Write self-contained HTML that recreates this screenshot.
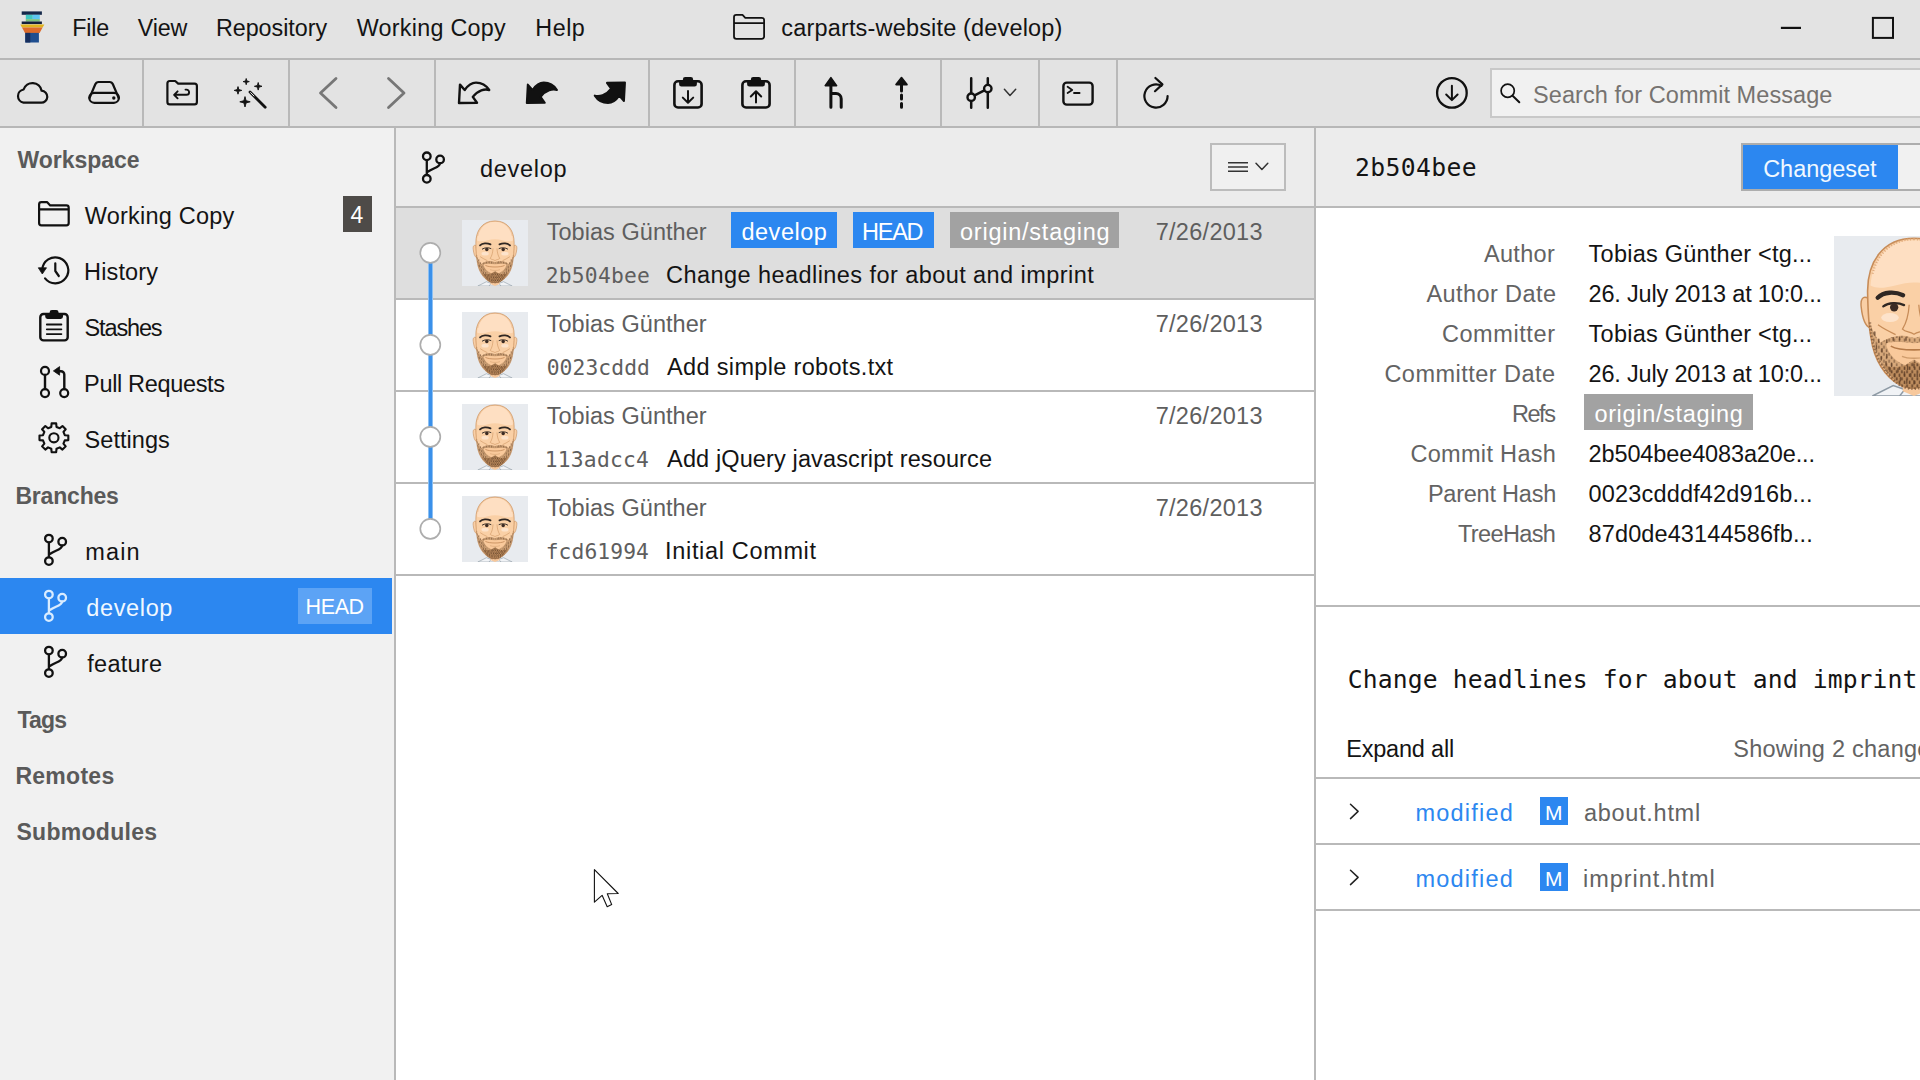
<!DOCTYPE html>
<html lang="en">
<head>
<meta charset="utf-8">
<title>carparts-website (develop)</title>
<style>
html,body{margin:0;padding:0;background:#fff;}
body{width:1920px;height:1080px;overflow:hidden;font-family:'Liberation Sans',sans-serif;}
#app{position:relative;width:1920px;height:1080px;overflow:hidden;background:#fff;}
.b{position:absolute;box-sizing:border-box;}
.t{position:absolute;white-space:pre;line-height:normal;}
.ln{position:absolute;background:#b9b9b9;}
svg.ic{position:absolute;left:0;top:0;width:1920px;height:1080px;overflow:visible;}
</style>
</head>

<body>
<div id="app">
<!-- title bar + toolbar -->
<div class="b" style="left:0;top:0;width:1920px;height:127px;background:#e3e3e3"></div>
<div class="ln" style="left:0;top:58px;width:1920px;height:2px;background:#b7b7b7"></div>
<div class="ln" style="left:0;top:126px;width:1920px;height:2px;background:#b7b7b7"></div>
<!-- toolbar dividers -->
<div class="ln" style="left:142px;top:60px;width:2px;height:66px"></div>
<div class="ln" style="left:288px;top:60px;width:2px;height:66px"></div>
<div class="ln" style="left:434px;top:60px;width:2px;height:66px"></div>
<div class="ln" style="left:648px;top:60px;width:2px;height:66px"></div>
<div class="ln" style="left:794px;top:60px;width:2px;height:66px"></div>
<div class="ln" style="left:940px;top:60px;width:2px;height:66px"></div>
<div class="ln" style="left:1038px;top:60px;width:2px;height:66px"></div>
<div class="ln" style="left:1116px;top:60px;width:2px;height:66px"></div>
<!-- search box -->
<div class="b" style="left:1490px;top:68px;width:440px;height:50px;background:#f1f1f1;border:2px solid #c8c8c8"></div>

<!-- sidebar -->
<div class="b" style="left:0;top:128px;width:394px;height:952px;background:#f1f1f1"></div>
<div class="ln" style="left:394px;top:128px;width:2px;height:952px"></div>
<div class="b" style="left:343px;top:196px;width:29px;height:36px;background:#4e4b48"></div>
<div class="b" style="left:0;top:578px;width:392px;height:56px;background:#2c87f0"></div>
<div class="b" style="left:298px;top:588px;width:74px;height:36px;background:#5ca3f5"></div>

<!-- commit list -->
<div class="b" style="left:396px;top:128px;width:918px;height:78px;background:#ececec"></div>
<div class="ln" style="left:396px;top:206px;width:918px;height:2px"></div>
<div class="b" style="left:1210px;top:143px;width:76px;height:48px;background:#f0f0f0;border:2px solid #bcbcbc"></div>
<div class="b" style="left:396px;top:208px;width:918px;height:90px;background:#dedede"></div>
<div class="ln" style="left:396px;top:298px;width:918px;height:2px"></div>
<div class="ln" style="left:396px;top:390px;width:918px;height:2px"></div>
<div class="ln" style="left:396px;top:482px;width:918px;height:2px"></div>
<div class="ln" style="left:396px;top:574px;width:918px;height:2px"></div>
<!-- graph line -->
<div class="b" style="left:428px;top:252px;width:5px;height:277px;background:#3a90ea;border-left:1px solid #8cc0f3;border-right:1px solid #8cc0f3"></div>
<!-- ref tags -->
<div class="b" style="left:731px;top:212px;width:106px;height:36px;background:#2c87f0"></div>
<div class="b" style="left:853px;top:212px;width:81px;height:36px;background:#2c87f0"></div>
<div class="b" style="left:950px;top:212px;width:169px;height:36px;background:#a2a2a2"></div>

<!-- detail -->
<div class="ln" style="left:1314px;top:128px;width:2px;height:952px"></div>
<div class="b" style="left:1316px;top:128px;width:604px;height:78px;background:#ececec"></div>
<div class="ln" style="left:1316px;top:206px;width:604px;height:2px"></div>
<div class="b" style="left:1741px;top:143px;width:200px;height:48px;background:#f1f1f1;border:2px solid #adadad"></div>
<div class="b" style="left:1743px;top:145px;width:155px;height:44px;background:#2c87f0"></div>
<div class="b" style="left:1584px;top:394px;width:169px;height:36px;background:#a2a2a2"></div>
<div class="ln" style="left:1314px;top:605px;width:606px;height:2px"></div>
<div class="ln" style="left:1314px;top:777px;width:606px;height:2px"></div>
<div class="ln" style="left:1314px;top:843px;width:606px;height:2px"></div>
<div class="ln" style="left:1314px;top:909px;width:606px;height:2px"></div>
<div class="b" style="left:1540px;top:797px;width:28px;height:28px;background:#2c87f0"></div>
<div class="b" style="left:1540px;top:863px;width:28px;height:28px;background:#2c87f0"></div>

<svg class="ic" viewBox="0 0 1920 1080" fill="none" stroke="none">
<defs><pattern id="stub" width="3.2" height="4.4" patternUnits="userSpaceOnUse"><rect x="0.4" y="0.3" width="0.9" height="1.9" fill="#4f3422"/><rect x="2" y="2.5" width="0.9" height="1.9" fill="#4f3422"/></pattern></defs>
<g id="logo">
<rect x="21.7" y="11.4" width="20.2" height="3.4" fill="#15284a"/>
<rect x="25.8" y="14.8" width="7" height="4.6" fill="#3fc8c2"/><rect x="32.8" y="14.8" width="7" height="4.6" fill="#5cc6f2"/>
<rect x="25.8" y="19.2" width="14" height="2.4" fill="#7ac27c"/>
<rect x="21.7" y="21.5" width="20.2" height="2.6" fill="#13203c"/>
<path d="M20.3 24.6H44.4L42.6 27.6H22z" fill="#e0b41f"/>
<path d="M22 27.5H42.6L39.6 32.9H25z" fill="#dd6b2a"/>
<rect x="25.3" y="32.9" width="13.6" height="9.6" fill="#1f4e8f"/><rect x="25.3" y="32.9" width="5" height="9.6" fill="#172f5e"/>
</g>
<path d="M734 36.5V17.2a2.3 2.3 0 0 1 2.3-2.3h6.2l2.8 2.9h16.500a2.3 2.3 0 0 1 2.3 2.3v16.400a2.3 2.3 0 0 1-2.3 2.3h-25.500a2.3 2.3 0 0 1-2.3-2.3zM734 23.2h30.1" stroke="#111" stroke-width="1.8" stroke-linejoin="round"/>
<rect x="1780.9" y="26.8" width="20.1" height="2.2" fill="#111"/>
<rect x="1872.9" y="17.9" width="20.1" height="20" stroke="#111" stroke-width="2"/>
<path d="M23.5 102.7h17.5a6 6 0 0 0 0.6-12 9.3 9.3 0 0 0-18-1.2 6.7 6.7 0 0 0-0.1 13.2z" stroke="#111" stroke-width="2.2" stroke-linecap="round" stroke-linejoin="round"/>
<path d="M89.5 98L95.3 84.3a3.6 3.6 0 0 1 3.3-2.3h11a3.6 3.6 0 0 1 3.3 2.3L118.7 98" stroke="#111" stroke-width="2.2" stroke-linecap="round" stroke-linejoin="round"/>
<rect x="89.3" y="92.8" width="29.6" height="10" rx="5" stroke="#111" stroke-width="2.2" stroke-linecap="round" stroke-linejoin="round"/><circle cx="113.8" cy="98" r="1.7" fill="#111"/>
<path d="M167.4 102V83.4a2.4 2.4 0 0 1 2.4-2.4h5.4l3 2.6h16.3a2.4 2.4 0 0 1 2.4 2.4v16a2.4 2.4 0 0 1-2.4 2.4h-24.7a2.4 2.4 0 0 1-2.4-2.4z" stroke="#111" stroke-width="2.2" stroke-linecap="round" stroke-linejoin="round"/>
<path d="M174.3 94.8h12.2a2.6 2.6 0 0 0 0-5.2h-1M177.6 91.3l-3.5 3.5 3.5 3.5" stroke="#111" stroke-width="1.9" stroke-linecap="round" stroke-linejoin="round"/>
<path d="M246.20 78.50L246.86 80.94L249.30 81.60L246.86 82.26L246.20 84.70L245.54 82.26L243.10 81.60L245.54 80.94z" fill="#111" stroke="#111" stroke-width="0.9" stroke-linejoin="round"/>
<path d="M258.20 82.50L259.01 85.49L262.00 86.30L259.01 87.11L258.20 90.10L257.39 87.11L254.40 86.30L257.39 85.49z" fill="#111" stroke="#111" stroke-width="0.9" stroke-linejoin="round"/>
<path d="M238.00 86.60L238.81 89.59L241.80 90.40L238.81 91.21L238.00 94.20L237.19 91.21L234.20 90.40L237.19 89.59z" fill="#111" stroke="#111" stroke-width="0.9" stroke-linejoin="round"/>
<path d="M245.00 96.60L246.10 100.70L250.20 101.80L246.10 102.90L245.00 107.00L243.90 102.90L239.80 101.80L243.90 100.70z" fill="#111" stroke="#111" stroke-width="0.9" stroke-linejoin="round"/>
<path d="M250 92L265.2 107.3" stroke="#111" stroke-width="2.8" stroke-linecap="round"/>
<path d="M250.6 92.6L254 96" stroke="#e3e3e3" stroke-width="1" stroke-linecap="round"/>
<path d="M336 78.5L320.5 93L336 107.5" stroke="#777" stroke-width="2.8" stroke-linecap="round" stroke-linejoin="round"/>
<path d="M388.5 78.5L404 93L388.5 107.5" stroke="#777" stroke-width="2.8" stroke-linecap="round" stroke-linejoin="round"/>
<path d="M459 103L460 84.6L464.7 90C468 85.2 472 82.6 476 82.6C481.5 82.6 486.5 85.8 489.2 90C485 88.6 478 90 472.8 96.9L477 102.8z" stroke="#111" stroke-width="2.4" stroke-linejoin="round"/>
<path d="M459 103L460 84.6L464.7 90C468 85.2 472 82.6 476 82.6C481.5 82.6 486.5 85.8 489.2 90C485 88.6 478 90 472.8 96.9L477 102.8z" transform="translate(67.8 0)" fill="#111" stroke="#111" stroke-width="2" stroke-linejoin="round"/>
<path d="M459 103L460 84.6L464.7 90C468 85.2 472 82.6 476 82.6C481.5 82.6 486.5 85.8 489.2 90C485 88.6 478 90 472.8 96.9L477 102.8z" transform="translate(1083.95 185.60) scale(-1 -1)" fill="#111" stroke="#111" stroke-width="2" stroke-linejoin="round"/>
<rect x="674.4" y="81.3" width="27.2" height="26.2" rx="3.6" stroke="#111" stroke-width="2.6"/><path d="M679.1 80.5h3.8v-1.2a2.3 2.3 0 0 1 2.3-2.3h5.6a2.3 2.3 0 0 1 2.3 2.3v1.2h3.8v3.8a2.3 2.3 0 0 1-2.3 2.3h-13.2a2.3 2.3 0 0 1-2.3-2.3z" fill="#111"/><path d="M688.0 91V102M682.8 97.6l5.2 5.2 5.2-5.2" stroke="#111" stroke-width="2" stroke-linecap="round" stroke-linejoin="round"/>
<rect x="742.4" y="81.3" width="27.2" height="26.2" rx="3.6" stroke="#111" stroke-width="2.6"/><path d="M747.1 80.5h3.8v-1.2a2.3 2.3 0 0 1 2.3-2.3h5.6a2.3 2.3 0 0 1 2.3 2.3v1.2h3.8v3.8a2.3 2.3 0 0 1-2.3 2.3h-13.2a2.3 2.3 0 0 1-2.3-2.3z" fill="#111"/><path d="M756.0 102.4V91.4M750.8 96.5l5.2-5.2 5.2 5.2" stroke="#111" stroke-width="2" stroke-linecap="round" stroke-linejoin="round"/>
<path d="M830.9 77.6L836.6 85.6H825.2z" fill="#111" stroke="#111" stroke-width="1.6" stroke-linejoin="round"/>
<path d="M830.9 85V107.3M831.5 93.6h4.5a5.2 5.2 0 0 1 5.2 5.2v8.5" stroke="#111" stroke-width="3" stroke-linecap="round" stroke-linejoin="round"/>
<path d="M901.5 77.6L907 84.6H896z" fill="#111" stroke="#111" stroke-width="1.6" stroke-linejoin="round"/>
<path d="M901.5 85V91M901.5 95V99M901.5 103.6V107.3" stroke="#111" stroke-width="3" stroke-linecap="round"/>
<path d="M971.2 78.2V107.7M987.8 78.2V107.7M971.2 97.2L987.8 88.6" stroke="#111" stroke-width="2.5" stroke-linecap="round"/>
<circle cx="971.2" cy="97.2" r="3.7" fill="#e3e3e3" stroke="#111" stroke-width="2.4"/><circle cx="987.8" cy="88.6" r="3.7" fill="#e3e3e3" stroke="#111" stroke-width="2.4"/>
<path d="M1004.4 89.3L1010 95.4L1015.7 89.3" stroke="#333" stroke-width="1.5" stroke-linecap="round" stroke-linejoin="round"/>
<rect x="1063.4" y="82.6" width="29.2" height="22" rx="3.4" stroke="#111" stroke-width="2.4" stroke-linecap="round" stroke-linejoin="round"/>
<path d="M1067.6 86.8l4.6 3.2-4.6 3M1074 93h5.6" stroke="#111" stroke-width="1.8" stroke-linecap="round" stroke-linejoin="round"/>
<path d="M1161.45 85.76A11.6 11.6 0 1 0 1167.60 96.00" stroke="#111" stroke-width="2.2" stroke-linecap="round" stroke-linejoin="round"/>
<path d="M1155.4 78l7 6.4-7.4 6.8" stroke="#111" stroke-width="2.2" stroke-linecap="round" stroke-linejoin="round"/>
<circle cx="1451.9" cy="92.9" r="14.8" stroke="#111" stroke-width="2.3"/>
<path d="M1451.9 85.8V99.8M1446.2 94.5l5.7 5.6 5.7-5.6" stroke="#111" stroke-width="2" stroke-linecap="round" stroke-linejoin="round"/>
<circle cx="1507.7" cy="90.7" r="6.6" stroke="#111" stroke-width="1.7"/><path d="M1512.6 95.7L1519.3 102.2" stroke="#111" stroke-width="2" stroke-linecap="round"/>
<path d="M39.1 223V204.4a2.3 2.3 0 0 1 2.3-2.3h5.6l3.2 3.3h16.2a2.3 2.3 0 0 1 2.3 2.3v15.3a2.3 2.3 0 0 1-2.3 2.3h-25a2.3 2.3 0 0 1-2.3-2.3zM39.1 209.3h29.6" stroke="#111" stroke-width="2.2" stroke-linecap="round" stroke-linejoin="round"/>
<path d="M42.30 269.40A13 13 0 1 1 45.06 278.40" stroke="#111" stroke-width="2.2" stroke-linecap="round" stroke-linejoin="round"/>
<path d="M38.3 267.8h8.2l-4.2 6.2z" fill="#111" stroke="#111" stroke-width="0.8" stroke-linejoin="round"/>
<path d="M55.3 263.3V271l3.5 5" stroke="#111" stroke-width="2.2" stroke-linecap="round" stroke-linejoin="round"/>
<rect x="40.3" y="314" width="27.4" height="26.4" rx="3.2" stroke="#111" stroke-width="2.4" stroke-linecap="round" stroke-linejoin="round"/>
<path d="M45.2 314h4.4v-1.6a2.4 2.4 0 0 1 2.4-2.4h4.2a2.4 2.4 0 0 1 2.4 2.4v1.6h4.4v2.6a2.3 2.3 0 0 1-2.3 2.3h-13.2a2.3 2.3 0 0 1-2.3-2.3z" fill="#111"/>
<path d="M46.8 324.5h14.6M46.8 329.3h14.6M46.8 334.1h14.6" stroke="#111" stroke-width="1.8" stroke-linecap="round"/>
<circle cx="45" cy="370.9" r="4" stroke="#111" stroke-width="2.2" stroke-linecap="round" stroke-linejoin="round"/><circle cx="45" cy="393.1" r="4" stroke="#111" stroke-width="2.2" stroke-linecap="round" stroke-linejoin="round"/><circle cx="64.2" cy="393.1" r="4" stroke="#111" stroke-width="2.2" stroke-linecap="round" stroke-linejoin="round"/>
<path d="M45 375V389M64.3 389V374.6a3.4 3.4 0 0 0-3.4-3.4h-2" stroke="#111" stroke-width="2.4" stroke-linecap="round" stroke-linejoin="round"/>
<path d="M53.4 370.9L59.6 366.6V375.2z" fill="#111" stroke="#111" stroke-width="0.8" stroke-linejoin="round"/>
<path d="M51.29 426.91L51.62 423.38L56.18 423.38L56.51 426.91L59.75 428.25L62.48 425.99L65.71 429.22L63.45 431.95L64.79 435.19L68.32 435.52L68.32 440.08L64.79 440.41L63.45 443.65L65.71 446.38L62.48 449.61L59.75 447.35L56.51 448.69L56.18 452.22L51.62 452.22L51.29 448.69L48.05 447.35L45.32 449.61L42.09 446.38L44.35 443.65L43.01 440.41L39.48 440.08L39.48 435.52L43.01 435.19L44.35 431.95L42.09 429.22L45.32 425.99L48.05 428.25z" stroke="#111" stroke-width="2.1" stroke-linejoin="round"/>
<circle cx="53.9" cy="437.8" r="4.6" stroke="#111" stroke-width="2.1"/>
<g transform="translate(0 0)" stroke="#111" stroke-width="2.3" stroke-linecap="round"><circle cx="48.9" cy="538.6" r="3.8"/><circle cx="48.9" cy="561.1" r="3.8"/><circle cx="62.2" cy="541.7" r="3.8"/><path d="M48.9 542.6V557.1M62 545.7C62 549.6 56 549.8 49.4 554.3"/></g>
<g transform="translate(0 56)" stroke="#d9ecff" stroke-width="2.3" stroke-linecap="round"><circle cx="48.9" cy="538.6" r="3.8"/><circle cx="48.9" cy="561.1" r="3.8"/><circle cx="62.2" cy="541.7" r="3.8"/><path d="M48.9 542.6V557.1M62 545.7C62 549.6 56 549.8 49.4 554.3"/></g>
<g transform="translate(0 112)" stroke="#111" stroke-width="2.3" stroke-linecap="round"><circle cx="48.9" cy="538.6" r="3.8"/><circle cx="48.9" cy="561.1" r="3.8"/><circle cx="62.2" cy="541.7" r="3.8"/><path d="M48.9 542.6V557.1M62 545.7C62 549.6 56 549.8 49.4 554.3"/></g>
<g transform="translate(377.90000000000003 -382.29999999999995)" stroke="#111" stroke-width="2.3" stroke-linecap="round"><circle cx="48.9" cy="538.6" r="3.8"/><circle cx="48.9" cy="561.1" r="3.8"/><circle cx="62.2" cy="541.7" r="3.8"/><path d="M48.9 542.6V557.1M62 545.7C62 549.6 56 549.8 49.4 554.3"/></g>
<path d="M1228 162.7h20M1228 167h20M1228 171.3h20" stroke="#333" stroke-width="1.5"/>
<path d="M1256 163.2L1261.9 169.5L1267.8 163.2" stroke="#333" stroke-width="1.5" stroke-linecap="round" stroke-linejoin="round"/>
<circle cx="430.3" cy="252.8" r="10" fill="#fff" stroke="#adadad" stroke-width="1.7"/>
<circle cx="430.3" cy="344.8" r="10" fill="#fff" stroke="#adadad" stroke-width="1.7"/>
<circle cx="430.3" cy="436.8" r="10" fill="#fff" stroke="#adadad" stroke-width="1.7"/>
<circle cx="430.3" cy="528.8" r="10" fill="#fff" stroke="#adadad" stroke-width="1.7"/>
<g transform="translate(462 220) scale(0.66)"><svg x="0" y="0" width="100" height="100" viewBox="0 0 100 100" overflow="hidden">
<rect width="100" height="100" fill="#e8ebef"/>
<path d="M24 100L37 93.500 50 98 63 93.500 76 100z" fill="#f1f3f6" stroke="#8d99a4" stroke-width="0.9"/>
<path d="M41 100L45 95M59 100L55 95" stroke="#8d99a4" stroke-width="0.9" fill="none"/>
<path d="M43 88h14v9l-7 3-7-3z" fill="#f7c89c"/>
<path d="M21.500 39C18 37 16.400 39.500 17 44.500C17.600 50 19 56 22.500 57.500zM78.500 39C82 37 83.600 39.500 83 44.500C82.400 50 81 56 77.500 57.500z" fill="#f9cfa6" stroke="#c78c58" stroke-width="0.9"/>
<path d="M50 1.400C30 1.400 20.800 17 21 35C21.200 47 21.600 56 23.200 64C25 77.500 32 88 41 93C45 95.600 55 95.600 59 92.500C68 88 75 77.500 76.800 64C78.400 56 78.800 47 79 35C79.200 17 70 1.400 50 1.400z" fill="#fad0a6" stroke="#c78c58" stroke-width="1"/>
<path d="M50 2.600C33 2.600 24 15 22.800 31C30 35 40 29 50 29C60 29 70 35 77.200 31C76 15 67 2.600 50 2.600z" fill="#fedfc2"/>
<path d="M50 2C36 2 27 11 24 24" fill="none" stroke="#d9a373" stroke-width="1.400" stroke-dasharray="0.7 1.100" opacity="0.8"/>
<path d="M50 2C64 2 73 11 76 24" fill="none" stroke="#d9a373" stroke-width="1.400" stroke-dasharray="0.7 1.100" opacity="0.8"/>
<ellipse cx="35" cy="51" rx="5.500" ry="2.800" fill="#fde3cb"/><ellipse cx="65" cy="51" rx="5.500" ry="2.800" fill="#fde3cb"/>
<path d="M22.500 54C23 62 24.500 71 28.500 78.500C33 86.500 39 92.300 43 94.200C47 96 53 96 57 93.800C61 92.300 67 86.500 71.500 78.500C75.500 71 77 62 77.500 54C76 59 74 63 71 66.500C67 64 62 62.300 57 62.300C54 62.300 52 63.600 50 63.600C48 63.600 46 62.300 43 62.300C38 62.300 33 64 29 66.500C26 63 24 59 22.500 54z" fill="#cf9f70" opacity="0.8"/><path d="M22.500 54C23 62 24.500 71 28.500 78.500C33 86.500 39 92.300 43 94.200C47 96 53 96 57 93.800C61 92.300 67 86.500 71.500 78.500C75.500 71 77 62 77.500 54C76 59 74 63 71 66.500C67 64 62 62.300 57 62.300C54 62.300 52 63.600 50 63.600C48 63.600 46 62.300 43 62.300C38 62.300 33 64 29 66.500C26 63 24 59 22.500 54z" fill="url(#stub)" opacity="0.55"/><path d="M30 79C35 84 43 82 50 78.500C57 82 65 84 70 79C66.500 86 61 92 57 93.900C53 96 47 96 43 93.900C39 92 33.500 86 30 79z" fill="#a87446" opacity="0.55"/><path d="M30 79C35 84 43 82 50 78.500C57 82 65 84 70 79C66.500 86 61 92 57 93.900C53 96 47 96 43 93.900C39 92 33.500 86 30 79z" fill="url(#stub)" opacity="0.7"/>
<path d="M22.500 54C23 62 24.500 71 28.500 78.500C33 86.500 39 92.300 43 94.200C47 96 53 96 57 93.800C61 92.300 67 86.500 71.500 78.500C75.500 71 77 62 77.500 54" fill="none" stroke="#6b4a30" stroke-width="1.500" stroke-dasharray="0.8 1.300" opacity="0.65"/>
<path d="M32.500 67.200C38 65.600 44 66.600 50 67C56 66.600 62 65.600 67.500 67.200C66.500 73 61.500 79 55.500 80.600L50 77.200L44.500 80.600C38.500 79 33.500 73 32.500 67.200z" fill="#f9c99b"/>
<path d="M35.500 68.800C41 72 59 72 64.500 68.800" fill="none" stroke="#b57a48" stroke-width="1"/>
<path d="M42.500 75.200C46 76.800 54 76.800 57.500 75.200" fill="none" stroke="#cf9c6c" stroke-width="0.8"/>
<g stroke="#5f4029" stroke-width="0.9" stroke-linecap="round" opacity="0.8">
<path d="M25.500 60v2M28 64.500v2M26.500 68.500v2M30 70.500v2M29.500 75.500v2M32.500 78.500v2M35 82.500v2M38 86v2M41.500 88.500v2M45.500 90v2M50 90.500v2M54.500 90v2M58.500 88.500v2M62 86v2M65 82.500v2M67.500 78.500v2M70.500 75.500v2M70 70.500v2M73.500 68.500v2M72 64.500v2M74.500 60v2M40 83v2M44 85v2M48 86v2M52 86v2M56 85v2M60 83v2M46 81.500v2M50 80v2M54 81.500v2M36 79.500v2M64 79.500v2M33 74v2M67 74v2M37 63.600v1.600M41 63.200v1.600M45 63.600v1.600M55 63.600v1.600M59 63.200v1.600M63 63.600v1.600M33 65v1.600M67 65v1.600"/>
</g>
<path d="M47 43C46.600 49 45.500 54 42.800 58.200C44.800 60.200 47 59.600 50 61.400C53 59.600 55.200 60.200 57.200 58.200C54.500 54 53.400 49 53 43" fill="none" stroke="#c78c58" stroke-width="0.8"/>
<path d="M27.500 55.500C31 58 35 60 38.500 61.600M72.500 55.500C69 58 65 60 61.500 61.600" fill="none" stroke="#c78c58" stroke-width="0.8"/>
<path d="M27.300 38.600C31 34.800 38 34.600 43.200 37" fill="none" stroke="#2f2723" stroke-width="2.700" stroke-linecap="round"/>
<path d="M72.700 38.600C69 34.800 62 34.600 56.800 37" fill="none" stroke="#2f2723" stroke-width="2.700" stroke-linecap="round"/>
<path d="M30.800 44C34 41.600 40 41.400 43.800 43.200M69.200 44C66 41.600 60 41.400 56.200 43.200" fill="none" stroke="#2f2723" stroke-width="1.400" stroke-linecap="round"/>
<circle cx="37.600" cy="44.600" r="2.600" fill="#3b2b24"/><circle cx="62.400" cy="44.600" r="2.600" fill="#3b2b24"/>
</svg>
</g>
<g transform="translate(462 312) scale(0.66)"><svg x="0" y="0" width="100" height="100" viewBox="0 0 100 100" overflow="hidden">
<rect width="100" height="100" fill="#e8ebef"/>
<path d="M24 100L37 93.500 50 98 63 93.500 76 100z" fill="#f1f3f6" stroke="#8d99a4" stroke-width="0.9"/>
<path d="M41 100L45 95M59 100L55 95" stroke="#8d99a4" stroke-width="0.9" fill="none"/>
<path d="M43 88h14v9l-7 3-7-3z" fill="#f7c89c"/>
<path d="M21.500 39C18 37 16.400 39.500 17 44.500C17.600 50 19 56 22.500 57.500zM78.500 39C82 37 83.600 39.500 83 44.500C82.400 50 81 56 77.500 57.500z" fill="#f9cfa6" stroke="#c78c58" stroke-width="0.9"/>
<path d="M50 1.400C30 1.400 20.800 17 21 35C21.200 47 21.600 56 23.200 64C25 77.500 32 88 41 93C45 95.600 55 95.600 59 92.500C68 88 75 77.500 76.800 64C78.400 56 78.800 47 79 35C79.200 17 70 1.400 50 1.400z" fill="#fad0a6" stroke="#c78c58" stroke-width="1"/>
<path d="M50 2.600C33 2.600 24 15 22.800 31C30 35 40 29 50 29C60 29 70 35 77.200 31C76 15 67 2.600 50 2.600z" fill="#fedfc2"/>
<path d="M50 2C36 2 27 11 24 24" fill="none" stroke="#d9a373" stroke-width="1.400" stroke-dasharray="0.7 1.100" opacity="0.8"/>
<path d="M50 2C64 2 73 11 76 24" fill="none" stroke="#d9a373" stroke-width="1.400" stroke-dasharray="0.7 1.100" opacity="0.8"/>
<ellipse cx="35" cy="51" rx="5.500" ry="2.800" fill="#fde3cb"/><ellipse cx="65" cy="51" rx="5.500" ry="2.800" fill="#fde3cb"/>
<path d="M22.500 54C23 62 24.500 71 28.500 78.500C33 86.500 39 92.300 43 94.200C47 96 53 96 57 93.800C61 92.300 67 86.500 71.500 78.500C75.500 71 77 62 77.500 54C76 59 74 63 71 66.500C67 64 62 62.300 57 62.300C54 62.300 52 63.600 50 63.600C48 63.600 46 62.300 43 62.300C38 62.300 33 64 29 66.500C26 63 24 59 22.500 54z" fill="#cf9f70" opacity="0.8"/><path d="M22.500 54C23 62 24.500 71 28.500 78.500C33 86.500 39 92.300 43 94.200C47 96 53 96 57 93.800C61 92.300 67 86.500 71.500 78.500C75.500 71 77 62 77.500 54C76 59 74 63 71 66.500C67 64 62 62.300 57 62.300C54 62.300 52 63.600 50 63.600C48 63.600 46 62.300 43 62.300C38 62.300 33 64 29 66.500C26 63 24 59 22.500 54z" fill="url(#stub)" opacity="0.55"/><path d="M30 79C35 84 43 82 50 78.500C57 82 65 84 70 79C66.500 86 61 92 57 93.900C53 96 47 96 43 93.900C39 92 33.500 86 30 79z" fill="#a87446" opacity="0.55"/><path d="M30 79C35 84 43 82 50 78.500C57 82 65 84 70 79C66.500 86 61 92 57 93.900C53 96 47 96 43 93.900C39 92 33.500 86 30 79z" fill="url(#stub)" opacity="0.7"/>
<path d="M22.500 54C23 62 24.500 71 28.500 78.500C33 86.500 39 92.300 43 94.200C47 96 53 96 57 93.800C61 92.300 67 86.500 71.500 78.500C75.500 71 77 62 77.500 54" fill="none" stroke="#6b4a30" stroke-width="1.500" stroke-dasharray="0.8 1.300" opacity="0.65"/>
<path d="M32.500 67.200C38 65.600 44 66.600 50 67C56 66.600 62 65.600 67.500 67.200C66.500 73 61.500 79 55.500 80.600L50 77.200L44.500 80.600C38.500 79 33.500 73 32.500 67.200z" fill="#f9c99b"/>
<path d="M35.500 68.800C41 72 59 72 64.500 68.800" fill="none" stroke="#b57a48" stroke-width="1"/>
<path d="M42.500 75.200C46 76.800 54 76.800 57.500 75.200" fill="none" stroke="#cf9c6c" stroke-width="0.8"/>
<g stroke="#5f4029" stroke-width="0.9" stroke-linecap="round" opacity="0.8">
<path d="M25.500 60v2M28 64.500v2M26.500 68.500v2M30 70.500v2M29.500 75.500v2M32.500 78.500v2M35 82.500v2M38 86v2M41.500 88.500v2M45.500 90v2M50 90.500v2M54.500 90v2M58.500 88.500v2M62 86v2M65 82.500v2M67.500 78.500v2M70.500 75.500v2M70 70.500v2M73.500 68.500v2M72 64.500v2M74.500 60v2M40 83v2M44 85v2M48 86v2M52 86v2M56 85v2M60 83v2M46 81.500v2M50 80v2M54 81.500v2M36 79.500v2M64 79.500v2M33 74v2M67 74v2M37 63.600v1.600M41 63.200v1.600M45 63.600v1.600M55 63.600v1.600M59 63.200v1.600M63 63.600v1.600M33 65v1.600M67 65v1.600"/>
</g>
<path d="M47 43C46.600 49 45.500 54 42.800 58.200C44.800 60.200 47 59.600 50 61.400C53 59.600 55.200 60.200 57.200 58.200C54.500 54 53.400 49 53 43" fill="none" stroke="#c78c58" stroke-width="0.8"/>
<path d="M27.500 55.500C31 58 35 60 38.500 61.600M72.500 55.500C69 58 65 60 61.500 61.600" fill="none" stroke="#c78c58" stroke-width="0.8"/>
<path d="M27.300 38.600C31 34.800 38 34.600 43.200 37" fill="none" stroke="#2f2723" stroke-width="2.700" stroke-linecap="round"/>
<path d="M72.700 38.600C69 34.800 62 34.600 56.800 37" fill="none" stroke="#2f2723" stroke-width="2.700" stroke-linecap="round"/>
<path d="M30.800 44C34 41.600 40 41.400 43.800 43.200M69.200 44C66 41.600 60 41.400 56.200 43.200" fill="none" stroke="#2f2723" stroke-width="1.400" stroke-linecap="round"/>
<circle cx="37.600" cy="44.600" r="2.600" fill="#3b2b24"/><circle cx="62.400" cy="44.600" r="2.600" fill="#3b2b24"/>
</svg>
</g>
<g transform="translate(462 404) scale(0.66)"><svg x="0" y="0" width="100" height="100" viewBox="0 0 100 100" overflow="hidden">
<rect width="100" height="100" fill="#e8ebef"/>
<path d="M24 100L37 93.500 50 98 63 93.500 76 100z" fill="#f1f3f6" stroke="#8d99a4" stroke-width="0.9"/>
<path d="M41 100L45 95M59 100L55 95" stroke="#8d99a4" stroke-width="0.9" fill="none"/>
<path d="M43 88h14v9l-7 3-7-3z" fill="#f7c89c"/>
<path d="M21.500 39C18 37 16.400 39.500 17 44.500C17.600 50 19 56 22.500 57.500zM78.500 39C82 37 83.600 39.500 83 44.500C82.400 50 81 56 77.500 57.500z" fill="#f9cfa6" stroke="#c78c58" stroke-width="0.9"/>
<path d="M50 1.400C30 1.400 20.800 17 21 35C21.200 47 21.600 56 23.200 64C25 77.500 32 88 41 93C45 95.600 55 95.600 59 92.500C68 88 75 77.500 76.800 64C78.400 56 78.800 47 79 35C79.200 17 70 1.400 50 1.400z" fill="#fad0a6" stroke="#c78c58" stroke-width="1"/>
<path d="M50 2.600C33 2.600 24 15 22.800 31C30 35 40 29 50 29C60 29 70 35 77.200 31C76 15 67 2.600 50 2.600z" fill="#fedfc2"/>
<path d="M50 2C36 2 27 11 24 24" fill="none" stroke="#d9a373" stroke-width="1.400" stroke-dasharray="0.7 1.100" opacity="0.8"/>
<path d="M50 2C64 2 73 11 76 24" fill="none" stroke="#d9a373" stroke-width="1.400" stroke-dasharray="0.7 1.100" opacity="0.8"/>
<ellipse cx="35" cy="51" rx="5.500" ry="2.800" fill="#fde3cb"/><ellipse cx="65" cy="51" rx="5.500" ry="2.800" fill="#fde3cb"/>
<path d="M22.500 54C23 62 24.500 71 28.500 78.500C33 86.500 39 92.300 43 94.200C47 96 53 96 57 93.800C61 92.300 67 86.500 71.500 78.500C75.500 71 77 62 77.500 54C76 59 74 63 71 66.500C67 64 62 62.300 57 62.300C54 62.300 52 63.600 50 63.600C48 63.600 46 62.300 43 62.300C38 62.300 33 64 29 66.500C26 63 24 59 22.500 54z" fill="#cf9f70" opacity="0.8"/><path d="M22.500 54C23 62 24.500 71 28.500 78.500C33 86.500 39 92.300 43 94.200C47 96 53 96 57 93.800C61 92.300 67 86.500 71.500 78.500C75.500 71 77 62 77.500 54C76 59 74 63 71 66.500C67 64 62 62.300 57 62.300C54 62.300 52 63.600 50 63.600C48 63.600 46 62.300 43 62.300C38 62.300 33 64 29 66.500C26 63 24 59 22.500 54z" fill="url(#stub)" opacity="0.55"/><path d="M30 79C35 84 43 82 50 78.500C57 82 65 84 70 79C66.500 86 61 92 57 93.900C53 96 47 96 43 93.900C39 92 33.500 86 30 79z" fill="#a87446" opacity="0.55"/><path d="M30 79C35 84 43 82 50 78.500C57 82 65 84 70 79C66.500 86 61 92 57 93.900C53 96 47 96 43 93.900C39 92 33.500 86 30 79z" fill="url(#stub)" opacity="0.7"/>
<path d="M22.500 54C23 62 24.500 71 28.500 78.500C33 86.500 39 92.300 43 94.200C47 96 53 96 57 93.800C61 92.300 67 86.500 71.500 78.500C75.500 71 77 62 77.500 54" fill="none" stroke="#6b4a30" stroke-width="1.500" stroke-dasharray="0.8 1.300" opacity="0.65"/>
<path d="M32.500 67.200C38 65.600 44 66.600 50 67C56 66.600 62 65.600 67.500 67.200C66.500 73 61.500 79 55.500 80.600L50 77.200L44.500 80.600C38.500 79 33.500 73 32.500 67.200z" fill="#f9c99b"/>
<path d="M35.500 68.800C41 72 59 72 64.500 68.800" fill="none" stroke="#b57a48" stroke-width="1"/>
<path d="M42.500 75.200C46 76.800 54 76.800 57.500 75.200" fill="none" stroke="#cf9c6c" stroke-width="0.8"/>
<g stroke="#5f4029" stroke-width="0.9" stroke-linecap="round" opacity="0.8">
<path d="M25.500 60v2M28 64.500v2M26.500 68.500v2M30 70.500v2M29.500 75.500v2M32.500 78.500v2M35 82.500v2M38 86v2M41.500 88.500v2M45.500 90v2M50 90.500v2M54.500 90v2M58.500 88.500v2M62 86v2M65 82.500v2M67.500 78.500v2M70.500 75.500v2M70 70.500v2M73.500 68.500v2M72 64.500v2M74.500 60v2M40 83v2M44 85v2M48 86v2M52 86v2M56 85v2M60 83v2M46 81.500v2M50 80v2M54 81.500v2M36 79.500v2M64 79.500v2M33 74v2M67 74v2M37 63.600v1.600M41 63.200v1.600M45 63.600v1.600M55 63.600v1.600M59 63.200v1.600M63 63.600v1.600M33 65v1.600M67 65v1.600"/>
</g>
<path d="M47 43C46.600 49 45.500 54 42.800 58.200C44.800 60.200 47 59.600 50 61.400C53 59.600 55.200 60.200 57.200 58.200C54.500 54 53.400 49 53 43" fill="none" stroke="#c78c58" stroke-width="0.8"/>
<path d="M27.500 55.500C31 58 35 60 38.500 61.600M72.500 55.500C69 58 65 60 61.500 61.600" fill="none" stroke="#c78c58" stroke-width="0.8"/>
<path d="M27.300 38.600C31 34.800 38 34.600 43.200 37" fill="none" stroke="#2f2723" stroke-width="2.700" stroke-linecap="round"/>
<path d="M72.700 38.600C69 34.800 62 34.600 56.800 37" fill="none" stroke="#2f2723" stroke-width="2.700" stroke-linecap="round"/>
<path d="M30.800 44C34 41.600 40 41.400 43.800 43.200M69.200 44C66 41.600 60 41.400 56.200 43.200" fill="none" stroke="#2f2723" stroke-width="1.400" stroke-linecap="round"/>
<circle cx="37.600" cy="44.600" r="2.600" fill="#3b2b24"/><circle cx="62.400" cy="44.600" r="2.600" fill="#3b2b24"/>
</svg>
</g>
<g transform="translate(462 496) scale(0.66)"><svg x="0" y="0" width="100" height="100" viewBox="0 0 100 100" overflow="hidden">
<rect width="100" height="100" fill="#e8ebef"/>
<path d="M24 100L37 93.500 50 98 63 93.500 76 100z" fill="#f1f3f6" stroke="#8d99a4" stroke-width="0.9"/>
<path d="M41 100L45 95M59 100L55 95" stroke="#8d99a4" stroke-width="0.9" fill="none"/>
<path d="M43 88h14v9l-7 3-7-3z" fill="#f7c89c"/>
<path d="M21.500 39C18 37 16.400 39.500 17 44.500C17.600 50 19 56 22.500 57.500zM78.500 39C82 37 83.600 39.500 83 44.500C82.400 50 81 56 77.500 57.500z" fill="#f9cfa6" stroke="#c78c58" stroke-width="0.9"/>
<path d="M50 1.400C30 1.400 20.800 17 21 35C21.200 47 21.600 56 23.200 64C25 77.500 32 88 41 93C45 95.600 55 95.600 59 92.500C68 88 75 77.500 76.800 64C78.400 56 78.800 47 79 35C79.200 17 70 1.400 50 1.400z" fill="#fad0a6" stroke="#c78c58" stroke-width="1"/>
<path d="M50 2.600C33 2.600 24 15 22.800 31C30 35 40 29 50 29C60 29 70 35 77.200 31C76 15 67 2.600 50 2.600z" fill="#fedfc2"/>
<path d="M50 2C36 2 27 11 24 24" fill="none" stroke="#d9a373" stroke-width="1.400" stroke-dasharray="0.7 1.100" opacity="0.8"/>
<path d="M50 2C64 2 73 11 76 24" fill="none" stroke="#d9a373" stroke-width="1.400" stroke-dasharray="0.7 1.100" opacity="0.8"/>
<ellipse cx="35" cy="51" rx="5.500" ry="2.800" fill="#fde3cb"/><ellipse cx="65" cy="51" rx="5.500" ry="2.800" fill="#fde3cb"/>
<path d="M22.500 54C23 62 24.500 71 28.500 78.500C33 86.500 39 92.300 43 94.200C47 96 53 96 57 93.800C61 92.300 67 86.500 71.500 78.500C75.500 71 77 62 77.500 54C76 59 74 63 71 66.500C67 64 62 62.300 57 62.300C54 62.300 52 63.600 50 63.600C48 63.600 46 62.300 43 62.300C38 62.300 33 64 29 66.500C26 63 24 59 22.500 54z" fill="#cf9f70" opacity="0.8"/><path d="M22.500 54C23 62 24.500 71 28.500 78.500C33 86.500 39 92.300 43 94.200C47 96 53 96 57 93.800C61 92.300 67 86.500 71.500 78.500C75.500 71 77 62 77.500 54C76 59 74 63 71 66.500C67 64 62 62.300 57 62.300C54 62.300 52 63.600 50 63.600C48 63.600 46 62.300 43 62.300C38 62.300 33 64 29 66.500C26 63 24 59 22.500 54z" fill="url(#stub)" opacity="0.55"/><path d="M30 79C35 84 43 82 50 78.500C57 82 65 84 70 79C66.500 86 61 92 57 93.900C53 96 47 96 43 93.900C39 92 33.500 86 30 79z" fill="#a87446" opacity="0.55"/><path d="M30 79C35 84 43 82 50 78.500C57 82 65 84 70 79C66.500 86 61 92 57 93.900C53 96 47 96 43 93.900C39 92 33.500 86 30 79z" fill="url(#stub)" opacity="0.7"/>
<path d="M22.500 54C23 62 24.500 71 28.500 78.500C33 86.500 39 92.300 43 94.200C47 96 53 96 57 93.800C61 92.300 67 86.500 71.500 78.500C75.500 71 77 62 77.500 54" fill="none" stroke="#6b4a30" stroke-width="1.500" stroke-dasharray="0.8 1.300" opacity="0.65"/>
<path d="M32.500 67.200C38 65.600 44 66.600 50 67C56 66.600 62 65.600 67.500 67.200C66.500 73 61.500 79 55.500 80.600L50 77.200L44.500 80.600C38.500 79 33.500 73 32.500 67.200z" fill="#f9c99b"/>
<path d="M35.500 68.800C41 72 59 72 64.500 68.800" fill="none" stroke="#b57a48" stroke-width="1"/>
<path d="M42.500 75.200C46 76.800 54 76.800 57.500 75.200" fill="none" stroke="#cf9c6c" stroke-width="0.8"/>
<g stroke="#5f4029" stroke-width="0.9" stroke-linecap="round" opacity="0.8">
<path d="M25.500 60v2M28 64.500v2M26.500 68.500v2M30 70.500v2M29.500 75.500v2M32.500 78.500v2M35 82.500v2M38 86v2M41.500 88.500v2M45.500 90v2M50 90.500v2M54.500 90v2M58.500 88.500v2M62 86v2M65 82.500v2M67.500 78.500v2M70.500 75.500v2M70 70.500v2M73.500 68.500v2M72 64.500v2M74.500 60v2M40 83v2M44 85v2M48 86v2M52 86v2M56 85v2M60 83v2M46 81.500v2M50 80v2M54 81.500v2M36 79.500v2M64 79.500v2M33 74v2M67 74v2M37 63.600v1.600M41 63.200v1.600M45 63.600v1.600M55 63.600v1.600M59 63.200v1.600M63 63.600v1.600M33 65v1.600M67 65v1.600"/>
</g>
<path d="M47 43C46.600 49 45.500 54 42.800 58.200C44.800 60.200 47 59.600 50 61.400C53 59.600 55.200 60.200 57.200 58.200C54.500 54 53.400 49 53 43" fill="none" stroke="#c78c58" stroke-width="0.8"/>
<path d="M27.500 55.500C31 58 35 60 38.500 61.600M72.500 55.500C69 58 65 60 61.500 61.600" fill="none" stroke="#c78c58" stroke-width="0.8"/>
<path d="M27.300 38.600C31 34.800 38 34.600 43.200 37" fill="none" stroke="#2f2723" stroke-width="2.700" stroke-linecap="round"/>
<path d="M72.700 38.600C69 34.800 62 34.600 56.800 37" fill="none" stroke="#2f2723" stroke-width="2.700" stroke-linecap="round"/>
<path d="M30.800 44C34 41.600 40 41.400 43.800 43.200M69.200 44C66 41.600 60 41.400 56.200 43.200" fill="none" stroke="#2f2723" stroke-width="1.400" stroke-linecap="round"/>
<circle cx="37.600" cy="44.600" r="2.600" fill="#3b2b24"/><circle cx="62.400" cy="44.600" r="2.600" fill="#3b2b24"/>
</svg>
</g>
<g transform="translate(1834 236) scale(1.6)"><svg x="0" y="0" width="100" height="100" viewBox="0 0 100 100" overflow="hidden">
<rect width="100" height="100" fill="#e8ebef"/>
<path d="M24 100L37 93.500 50 98 63 93.500 76 100z" fill="#f1f3f6" stroke="#8d99a4" stroke-width="0.9"/>
<path d="M41 100L45 95M59 100L55 95" stroke="#8d99a4" stroke-width="0.9" fill="none"/>
<path d="M43 88h14v9l-7 3-7-3z" fill="#f7c89c"/>
<path d="M21.500 39C18 37 16.400 39.500 17 44.500C17.600 50 19 56 22.500 57.500zM78.500 39C82 37 83.600 39.500 83 44.500C82.400 50 81 56 77.500 57.500z" fill="#f9cfa6" stroke="#c78c58" stroke-width="0.9"/>
<path d="M50 1.400C30 1.400 20.800 17 21 35C21.200 47 21.600 56 23.200 64C25 77.500 32 88 41 93C45 95.600 55 95.600 59 92.500C68 88 75 77.500 76.800 64C78.400 56 78.800 47 79 35C79.200 17 70 1.400 50 1.400z" fill="#fad0a6" stroke="#c78c58" stroke-width="1"/>
<path d="M50 2.600C33 2.600 24 15 22.800 31C30 35 40 29 50 29C60 29 70 35 77.200 31C76 15 67 2.600 50 2.600z" fill="#fedfc2"/>
<path d="M50 2C36 2 27 11 24 24" fill="none" stroke="#d9a373" stroke-width="1.400" stroke-dasharray="0.7 1.100" opacity="0.8"/>
<path d="M50 2C64 2 73 11 76 24" fill="none" stroke="#d9a373" stroke-width="1.400" stroke-dasharray="0.7 1.100" opacity="0.8"/>
<ellipse cx="35" cy="51" rx="5.500" ry="2.800" fill="#fde3cb"/><ellipse cx="65" cy="51" rx="5.500" ry="2.800" fill="#fde3cb"/>
<path d="M22.500 54C23 62 24.500 71 28.500 78.500C33 86.500 39 92.300 43 94.200C47 96 53 96 57 93.800C61 92.300 67 86.500 71.500 78.500C75.500 71 77 62 77.500 54C76 59 74 63 71 66.500C67 64 62 62.300 57 62.300C54 62.300 52 63.600 50 63.600C48 63.600 46 62.300 43 62.300C38 62.300 33 64 29 66.500C26 63 24 59 22.500 54z" fill="#cf9f70" opacity="0.8"/><path d="M22.500 54C23 62 24.500 71 28.500 78.500C33 86.500 39 92.300 43 94.200C47 96 53 96 57 93.800C61 92.300 67 86.500 71.500 78.500C75.500 71 77 62 77.500 54C76 59 74 63 71 66.500C67 64 62 62.300 57 62.300C54 62.300 52 63.600 50 63.600C48 63.600 46 62.300 43 62.300C38 62.300 33 64 29 66.500C26 63 24 59 22.500 54z" fill="url(#stub)" opacity="0.55"/><path d="M30 79C35 84 43 82 50 78.500C57 82 65 84 70 79C66.500 86 61 92 57 93.900C53 96 47 96 43 93.900C39 92 33.500 86 30 79z" fill="#a87446" opacity="0.55"/><path d="M30 79C35 84 43 82 50 78.500C57 82 65 84 70 79C66.500 86 61 92 57 93.900C53 96 47 96 43 93.900C39 92 33.500 86 30 79z" fill="url(#stub)" opacity="0.7"/>
<path d="M22.500 54C23 62 24.500 71 28.500 78.500C33 86.500 39 92.300 43 94.200C47 96 53 96 57 93.800C61 92.300 67 86.500 71.500 78.500C75.500 71 77 62 77.500 54" fill="none" stroke="#6b4a30" stroke-width="1.500" stroke-dasharray="0.8 1.300" opacity="0.65"/>
<path d="M32.500 67.200C38 65.600 44 66.600 50 67C56 66.600 62 65.600 67.500 67.200C66.500 73 61.500 79 55.500 80.600L50 77.200L44.500 80.600C38.500 79 33.500 73 32.500 67.200z" fill="#f9c99b"/>
<path d="M35.500 68.800C41 72 59 72 64.500 68.800" fill="none" stroke="#b57a48" stroke-width="1"/>
<path d="M42.500 75.200C46 76.800 54 76.800 57.500 75.200" fill="none" stroke="#cf9c6c" stroke-width="0.8"/>
<g stroke="#5f4029" stroke-width="0.9" stroke-linecap="round" opacity="0.8">
<path d="M25.500 60v2M28 64.500v2M26.500 68.500v2M30 70.500v2M29.500 75.500v2M32.500 78.500v2M35 82.500v2M38 86v2M41.500 88.500v2M45.500 90v2M50 90.500v2M54.500 90v2M58.500 88.500v2M62 86v2M65 82.500v2M67.500 78.500v2M70.500 75.500v2M70 70.500v2M73.500 68.500v2M72 64.500v2M74.500 60v2M40 83v2M44 85v2M48 86v2M52 86v2M56 85v2M60 83v2M46 81.500v2M50 80v2M54 81.500v2M36 79.500v2M64 79.500v2M33 74v2M67 74v2M37 63.600v1.600M41 63.200v1.600M45 63.600v1.600M55 63.600v1.600M59 63.200v1.600M63 63.600v1.600M33 65v1.600M67 65v1.600"/>
</g>
<path d="M47 43C46.600 49 45.500 54 42.800 58.200C44.800 60.200 47 59.600 50 61.400C53 59.600 55.200 60.200 57.200 58.200C54.500 54 53.400 49 53 43" fill="none" stroke="#c78c58" stroke-width="0.8"/>
<path d="M27.500 55.500C31 58 35 60 38.500 61.600M72.500 55.500C69 58 65 60 61.500 61.600" fill="none" stroke="#c78c58" stroke-width="0.8"/>
<path d="M27.300 38.600C31 34.800 38 34.600 43.200 37" fill="none" stroke="#2f2723" stroke-width="2.700" stroke-linecap="round"/>
<path d="M72.700 38.600C69 34.800 62 34.600 56.800 37" fill="none" stroke="#2f2723" stroke-width="2.700" stroke-linecap="round"/>
<path d="M30.800 44C34 41.600 40 41.400 43.800 43.200M69.200 44C66 41.600 60 41.400 56.200 43.200" fill="none" stroke="#2f2723" stroke-width="1.400" stroke-linecap="round"/>
<circle cx="37.600" cy="44.600" r="2.600" fill="#3b2b24"/><circle cx="62.400" cy="44.600" r="2.600" fill="#3b2b24"/>
</svg>
</g>
<path d="M1350.5 804.1999999999999L1358.1 811.4L1350.5 818.6" stroke="#222" stroke-width="1.5" stroke-linecap="round" stroke-linejoin="round"/>
<path d="M1350.5 870.1999999999999L1358.1 877.4L1350.5 884.6" stroke="#222" stroke-width="1.5" stroke-linecap="round" stroke-linejoin="round"/>
<path d="M594.4 869.6V902.2L602.1 895.3L607.2 906.7L611.7 904.6L607.3 893.8L618.2 893.5z" fill="#fff" stroke="#111" stroke-width="1.1" stroke-linejoin="round"/>
</svg>
<!-- text -->
<span class="t" style="left:72.30px;top:14.60px;font-size:23.3px;color:#141414;letter-spacing:-0.200px">File</span>
<span class="t" style="left:137.70px;top:14.60px;font-size:23.3px;color:#141414;letter-spacing:-0.167px">View</span>
<span class="t" style="left:215.90px;top:14.60px;font-size:23.3px;color:#141414;letter-spacing:-0.011px">Repository</span>
<span class="t" style="left:356.70px;top:14.60px;font-size:23.3px;color:#141414;letter-spacing:0.291px">Working Copy</span>
<span class="t" style="left:535.30px;top:14.60px;font-size:23.3px;color:#141414;letter-spacing:0.533px">Help</span>
<span class="t" style="left:781.30px;top:15.00px;font-size:23.5px;color:#141414;letter-spacing:0.168px">carparts-website (develop)</span>
<span class="t" style="left:1533.10px;top:81.80px;font-size:23.5px;color:#767370;letter-spacing:0.062px">Search for Commit Message</span>
<span class="t" style="left:17.60px;top:147.00px;font-size:23px;color:#5a5a5a;letter-spacing:-0.050px;font-weight:700">Workspace</span>
<span class="t" style="left:84.70px;top:203.00px;font-size:23.5px;color:#141414;letter-spacing:0.227px">Working Copy</span>
<span class="t" style="left:350.40px;top:202.00px;font-size:23px;color:#fff">4</span>
<span class="t" style="left:84.10px;top:259.00px;font-size:23.5px;color:#141414;letter-spacing:0.133px">History</span>
<span class="t" style="left:84.60px;top:315.00px;font-size:23.5px;color:#141414;letter-spacing:-1.150px">Stashes</span>
<span class="t" style="left:84.10px;top:371.00px;font-size:23.5px;color:#141414;letter-spacing:-0.342px">Pull Requests</span>
<span class="t" style="left:84.60px;top:427.00px;font-size:23.5px;color:#141414;letter-spacing:0.043px">Settings</span>
<span class="t" style="left:15.40px;top:483.00px;font-size:23px;color:#5a5a5a;letter-spacing:-0.186px;font-weight:700">Branches</span>
<span class="t" style="left:85.30px;top:539.00px;font-size:23.5px;color:#141414;letter-spacing:1.100px">main</span>
<span class="t" style="left:86.30px;top:595.00px;font-size:23.5px;color:#f0f8ff;letter-spacing:0.633px">develop</span>
<span class="t" style="left:305.50px;top:595.00px;font-size:21.5px;color:#fff;letter-spacing:-0.367px">HEAD</span>
<span class="t" style="left:87.30px;top:651.00px;font-size:23.5px;color:#141414;letter-spacing:0.250px">feature</span>
<span class="t" style="left:17.40px;top:707.00px;font-size:23px;color:#5a5a5a;letter-spacing:-0.767px;font-weight:700">Tags</span>
<span class="t" style="left:15.40px;top:763.00px;font-size:23px;color:#5a5a5a;letter-spacing:0.283px;font-weight:700">Remotes</span>
<span class="t" style="left:16.40px;top:819.00px;font-size:23px;color:#5a5a5a;letter-spacing:0.300px;font-weight:700">Submodules</span>
<span class="t" style="left:480.00px;top:155.80px;font-size:23.5px;color:#141414;letter-spacing:0.700px">develop</span>
<span class="t" style="left:546.70px;top:219.30px;font-size:23.5px;color:#5e5e5e;letter-spacing:0.046px">Tobias Günther</span>
<span class="t" style="left:1155.70px;top:219.30px;font-size:23.5px;color:#5e5e5e;letter-spacing:0.287px">7/26/2013</span>
<span class="t" style="left:545.70px;top:262.80px;font-size:21.3px;color:#5e5e5e;letter-spacing:0.229px;font-family:'DejaVu Sans Mono', 'Liberation Mono', monospace">2b504bee</span>
<span class="t" style="left:666.10px;top:261.80px;font-size:23.5px;color:#141414;letter-spacing:0.435px">Change headlines for about and imprint</span>
<span class="t" style="left:546.70px;top:311.30px;font-size:23.5px;color:#5e5e5e;letter-spacing:0.046px">Tobias Günther</span>
<span class="t" style="left:1155.70px;top:311.30px;font-size:23.5px;color:#5e5e5e;letter-spacing:0.287px">7/26/2013</span>
<span class="t" style="left:546.70px;top:354.80px;font-size:21.3px;color:#5e5e5e;letter-spacing:0.086px;font-family:'DejaVu Sans Mono', 'Liberation Mono', monospace">0023cddd</span>
<span class="t" style="left:667.10px;top:353.80px;font-size:23.5px;color:#141414;letter-spacing:0.330px">Add simple robots.txt</span>
<span class="t" style="left:546.70px;top:403.30px;font-size:23.5px;color:#5e5e5e;letter-spacing:0.046px">Tobias Günther</span>
<span class="t" style="left:1155.70px;top:403.30px;font-size:23.5px;color:#5e5e5e;letter-spacing:0.287px">7/26/2013</span>
<span class="t" style="left:544.70px;top:446.80px;font-size:21.3px;color:#5e5e5e;letter-spacing:0.229px;font-family:'DejaVu Sans Mono', 'Liberation Mono', monospace">113adcc4</span>
<span class="t" style="left:667.10px;top:445.80px;font-size:23.5px;color:#141414;letter-spacing:0.124px">Add jQuery javascript resource</span>
<span class="t" style="left:546.70px;top:495.30px;font-size:23.5px;color:#5e5e5e;letter-spacing:0.046px">Tobias Günther</span>
<span class="t" style="left:1155.70px;top:495.30px;font-size:23.5px;color:#5e5e5e;letter-spacing:0.287px">7/26/2013</span>
<span class="t" style="left:545.70px;top:538.80px;font-size:21.3px;color:#5e5e5e;letter-spacing:0.086px;font-family:'DejaVu Sans Mono', 'Liberation Mono', monospace">fcd61994</span>
<span class="t" style="left:665.10px;top:537.80px;font-size:23.5px;color:#141414;letter-spacing:0.662px">Initial Commit</span>
<span class="t" style="left:741.40px;top:219.30px;font-size:23.5px;color:#fff;letter-spacing:0.533px">develop</span>
<span class="t" style="left:862.10px;top:219.30px;font-size:23.5px;color:#fff;letter-spacing:-1.267px">HEAD</span>
<span class="t" style="left:960.00px;top:219.30px;font-size:23.5px;color:#fff;letter-spacing:0.762px">origin/staging</span>
<span class="t" style="left:1354.90px;top:153.00px;font-size:24.7px;color:#141414;letter-spacing:0.386px;font-family:'DejaVu Sans Mono', 'Liberation Mono', monospace">2b504bee</span>
<span class="t" style="left:1763.20px;top:155.70px;font-size:23.5px;color:#f0f8ff;letter-spacing:-0.037px">Changeset</span>
<span class="t" style="left:1483.90px;top:241.00px;font-size:23.5px;color:#636363;letter-spacing:0.340px">Author</span>
<span class="t" style="left:1426.40px;top:281.00px;font-size:23.5px;color:#636363;letter-spacing:0.420px">Author Date</span>
<span class="t" style="left:1441.90px;top:321.00px;font-size:23.5px;color:#636363;letter-spacing:0.588px">Committer</span>
<span class="t" style="left:1384.40px;top:361.00px;font-size:23.5px;color:#636363;letter-spacing:0.477px">Committer Date</span>
<span class="t" style="left:1511.90px;top:401.00px;font-size:23.5px;color:#636363;letter-spacing:-1.433px">Refs</span>
<span class="t" style="left:1410.40px;top:441.00px;font-size:23.5px;color:#636363;letter-spacing:0.320px">Commit Hash</span>
<span class="t" style="left:1427.90px;top:481.00px;font-size:23.5px;color:#636363;letter-spacing:-0.230px">Parent Hash</span>
<span class="t" style="left:1457.90px;top:521.00px;font-size:23.5px;color:#636363;letter-spacing:-0.614px">TreeHash</span>
<span class="t" style="left:1588.60px;top:241.00px;font-size:23.5px;color:#141414;letter-spacing:0.235px">Tobias Günther &lt;tg...</span>
<span class="t" style="left:1588.60px;top:281.00px;font-size:23.5px;color:#141414;letter-spacing:-0.187px">26. July 2013 at 10:0...</span>
<span class="t" style="left:1588.60px;top:321.00px;font-size:23.5px;color:#141414;letter-spacing:0.235px">Tobias Günther &lt;tg...</span>
<span class="t" style="left:1588.60px;top:361.00px;font-size:23.5px;color:#141414;letter-spacing:-0.187px">26. July 2013 at 10:0...</span>
<span class="t" style="left:1594.40px;top:401.00px;font-size:23.5px;color:#fff;letter-spacing:0.669px">origin/staging</span>
<span class="t" style="left:1588.60px;top:441.00px;font-size:23.5px;color:#141414;letter-spacing:-0.128px">2b504bee4083a20e...</span>
<span class="t" style="left:1588.60px;top:481.00px;font-size:23.5px;color:#141414;letter-spacing:0.167px">0023cdddf42d916b...</span>
<span class="t" style="left:1588.60px;top:521.00px;font-size:23.5px;color:#141414;letter-spacing:0.111px">87d0de43144586fb...</span>
<span class="t" style="left:1347.70px;top:665.00px;font-size:24.7px;color:#141414;letter-spacing:0.135px;font-family:'DejaVu Sans Mono', 'Liberation Mono', monospace">Change headlines for about and imprint</span>
<span class="t" style="left:1346.20px;top:736.00px;font-size:23.5px;color:#141414;letter-spacing:-0.200px">Expand all</span>
<span class="t" style="left:1733.30px;top:736.00px;font-size:23.5px;color:#636363;letter-spacing:0.245px">Showing 2 changed files</span>
<span class="t" style="left:1415.50px;top:799.70px;font-size:23.5px;color:#2c87f0;letter-spacing:1.200px">modified</span>
<span class="t" style="left:1415.50px;top:865.70px;font-size:23.5px;color:#2c87f0;letter-spacing:1.200px">modified</span>
<span class="t" style="left:1545.10px;top:800.50px;font-size:21px;color:#fff">M</span>
<span class="t" style="left:1545.10px;top:866.50px;font-size:21px;color:#fff">M</span>
<span class="t" style="left:1584.00px;top:799.70px;font-size:23.5px;color:#636363;letter-spacing:0.711px">about.html</span>
<span class="t" style="left:1583.00px;top:865.70px;font-size:23.5px;color:#636363;letter-spacing:0.945px">imprint.html</span>
</div>
</body>
</html>
